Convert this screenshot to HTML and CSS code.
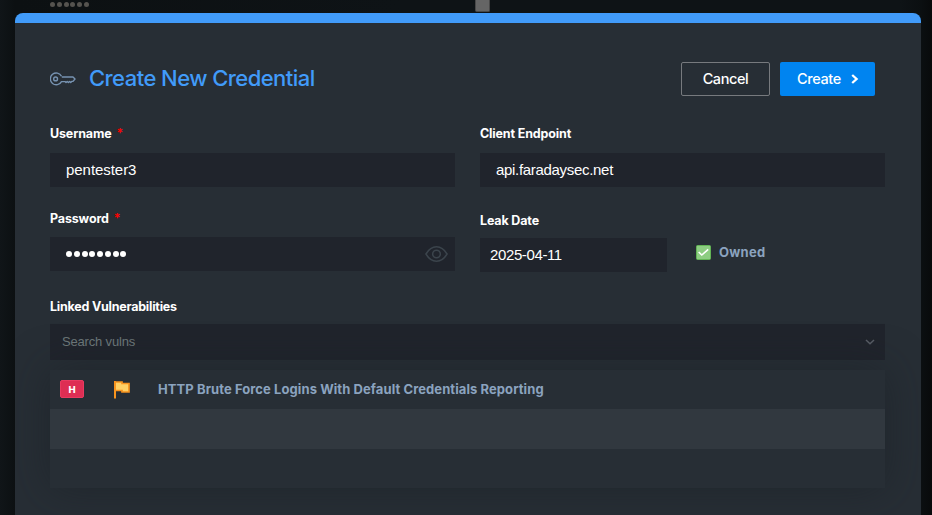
FILE: index.html
```html
<!DOCTYPE html>
<html lang="en">
<head>
<meta charset="utf-8">
<title>Create New Credential</title>
<link rel="stylesheet" href="styles.css">
</head>
<body>
<div class="backdrop"><span class="mask"><i></i><i></i><i></i><i></i><i></i><i></i></span><span class="box"></span></div>
<main class="modal">
  <header class="head">
    <svg class="key" viewBox="0 0 26 16" fill="none" stroke="currentColor" stroke-width="1.4" stroke-linejoin="round"><path d="M11.500 5.200A5.900 5.900 0 1 0 11.500 10.600H15L16 11.600L17.200 10.400L18.400 11.600L19.600 10.400L20.700 11.400L21.700 10.400H23L25 8L23 6H11.800"/><circle cx="5.600" cy="7.900" r="1.900"/></svg>
    <h1>Create New Credential</h1>
    <button class="btn cancel"><span>Cancel</span></button>
    <button class="btn create"><span>Create</span><svg viewBox="0 0 8 10" fill="none" stroke="currentColor" stroke-width="2.3"><path d="M1.2 1L5.6 5L1.2 9"/></svg></button>
  </header>
  <section class="grid">
    <div class="field">
      <label><span class="t-user">Username</span><b>*</b></label>
      <div class="input"><span class="v-user">pentester3</span></div>
    </div>
    <div class="field">
      <label><span class="t-client">Client Endpoint</span></label>
      <div class="input"><span class="v-api">api.faradaysec.net</span></div>
    </div>
    <div class="field">
      <label class="t-pass"><span>Password</span><b>*</b></label>
      <div class="input"><span class="dots"><i></i><i></i><i></i><i></i><i></i><i></i><i></i><i></i></span>
        <svg class="eye" viewBox="0 0 24 18" fill="none" stroke="currentColor" stroke-width="1.6"><path d="M1 9C4 4 7.500 1.500 12 1.500S20 4 23 9C20 14 16.500 16.500 12 16.500S4 14 1 9Z"/><circle cx="12" cy="9" r="4"/></svg>
      </div>
    </div>
    <div class="leak">
      <div class="field date">
        <label><span class="t-leak">Leak Date</span></label>
        <div class="input"><span class="v-date">2025-04-11</span></div>
      </div>
      <div class="owned"><svg viewBox="0 0 15 15" fill="none"><rect x=".5" y=".5" width="14" height="14" rx="1" fill="#8dcd82" stroke="#62b455"/><path d="M2.700 7L5.800 10L12.200 4.300" stroke="#fff" stroke-width="1.600"/></svg><span>Owned</span></div>
    </div>
  </section>
  <section class="vulns">
    <label><span class="t-linked">Linked Vulnerabilities</span></label>
    <div class="search"><span>Search vulns</span><svg viewBox="0 0 10 6" fill="none" stroke="currentColor" stroke-width="1.500"><path d="M1 1L5 4.800L9 1"/></svg></div>
    <div class="list">
      <div class="row"><span class="sev">H</span><svg class="flag" viewBox="0 0 16 18"><path d="M1 1H8V2.500H15V11H8V9.500H1Z" fill="#ffd166" stroke="#f7931e" stroke-width="1.700"/><path d="M1 0V17.500" stroke="#f7931e" stroke-width="2"/></svg><span class="name">HTTP Brute Force Logins With Default Credentials Reporting</span></div>
      <div class="row alt"></div>
      <div class="row"></div>
    </div>
  </section>
</main>
</body>
</html>
```
FILE: styles.css
```css
* { box-sizing: border-box; }
body {
  margin: 0; height: 515px; overflow: hidden;
  background: linear-gradient(90deg, #101518 0, #0c1012 15px, #0e1316 400px, #0e1316 900px, #0b0f11 921px, #080a0b 932px);
  font-family: Inter, "Liberation Sans", sans-serif; color: #fff;
}
span { white-space: nowrap; }
.backdrop { display: flex; height: 13px; padding-left: 50px; }
.mask { display: flex; gap: 1.800px; width: 425px; padding-top: 2px; }
.mask i { width: 5px; height: 5px; border-radius: 50%; background: #55534f; }
.box { width: 15px; height: 12px; border: 1px solid #484848; border-top: 0; border-radius: 0 0 2px 2px; background: #656565; }
.modal {
  width: 906px; height: 520px; margin-left: 15px; padding: 39px 36px 0 35px;
  border-top: 10px solid #419bf9; border-radius: 8px 8px 0 0; background: #272e35; overflow: hidden;
}
.head { display: flex; align-items: center; height: 34px; padding-right: 10px; }
.key { width: 26px; height: 16px; color: #7793b1; }
h1 { margin: 0 auto 2px 13px; font-size: 22px; line-height: 28px; font-weight: 500; letter-spacing: -.550px; color: #419bf9; white-space: nowrap; }
.btn { display: flex; align-items: center; justify-content: center; height: 34px; padding: 0; border-radius: 2px; font: 500 14.500px/20px Inter, sans-serif; letter-spacing: -.400px; color: #fff; }
.cancel { width: 89px; border: 1px solid #777a7e; background: none; }
.create { width: 95px; margin-left: 10px; padding-left: 1px; gap: 10px; border: 0; background: #0084f0; }
.create svg { width: 8px; height: 10px; }
.grid { display: grid; grid-template-columns: 405px 405px; grid-template-rows: 84px 88px; column-gap: 25px; padding-top: 29px; }
label { display: flex; height: 28px; font-size: 12.500px; line-height: 18px; font-weight: 650; letter-spacing: -.150px; }
label b { margin-left: 5px; font-weight: 600; color: #f00; }
.t-pass { line-height: 20px; }
.input { display: flex; align-items: center; height: 34px; padding: 0 7px 0 16px; background: #20242c; font: 15px "Liberation Sans", sans-serif; }
.v-user, .v-api, .v-date { margin-bottom: 2px; }
.v-user { letter-spacing: -.050px; }
.v-api { letter-spacing: -.310px; }
.v-date { letter-spacing: -.380px; }
.leak { display: flex; padding-top: 3px; }
.date { width: 187px; }
.date label { height: 26px; }
.date .input { padding-left: 10px; }
.dots { display: flex; gap: 1.750px; }
.dots i { width: 6px; height: 6px; border-radius: 50%; background: #fff; }
.eye { width: 23px; height: 18px; margin-left: auto; color: #3b444c; }
.owned { display: flex; align-items: center; gap: 8px; height: 18px; margin: 31px 0 0 29px; font-size: 13px; font-weight: 700; letter-spacing: .250px; color: #8ba3bf; }
.owned svg { width: 15px; height: 15px; }
.vulns label { height: 27px; line-height: 19px; letter-spacing: -.230px; }
.search { display: flex; align-items: center; justify-content: space-between; height: 36px; padding: 0 10px 0 12px; background: #20242c; color: #697476; font: 13px "Liberation Sans", sans-serif; letter-spacing: -.170px; }
.search span { margin-bottom: 2px; }
.search svg { width: 10px; height: 6px; color: #555a62; }
.list { margin-top: 10px; box-shadow: 0 0 40px rgba(25,31,37,.550); }
.row { display: flex; align-items: center; height: 39px; padding-left: 10px; background: #272e35; }
.alt { height: 40px; background: #31383f; }
.sev { width: 24px; height: 18px; margin-bottom: 1px; border: 1px solid #e83b61; border-radius: 2px; background: #de2e53; font-size: 9.500px; line-height: 17px; font-weight: 800; text-align: center; }
.flag { width: 16px; height: 18px; margin-left: 30px; }
.name { margin: 0 0 1px 28px; font-size: 13px; font-weight: 700; letter-spacing: .082px; color: #8ba3bf; }
```
